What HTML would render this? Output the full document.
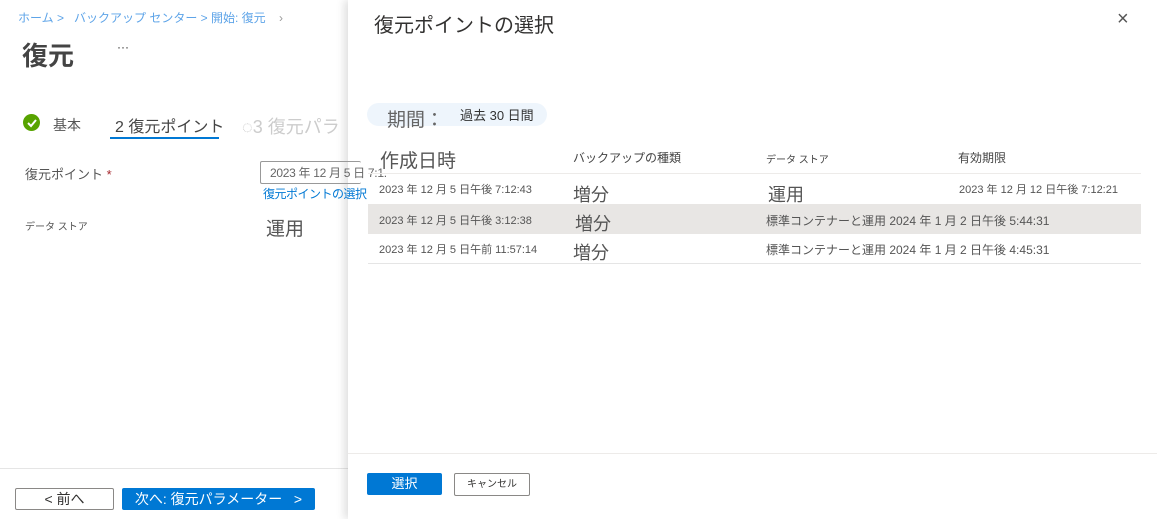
<!DOCTYPE html><html><head><meta charset="utf-8"><style>
body{margin:0;width:1157px;height:519px;position:relative;overflow:hidden;background:#fff;font-family:"Liberation Sans","Noto Sans CJK JP",sans-serif;color:#323130}
.a{position:absolute;white-space:nowrap}
</style></head><body>
<div class="a" style="left:18px;top:9px;font-size:12px;color:#5ea4e8">ホーム &gt;&nbsp;&nbsp;&nbsp;バックアップ センター &gt; 開始: 復元&nbsp;&nbsp;&nbsp;&nbsp;<span style="color:#999">›</span></div>
<div class="a" style="left:22px;top:36px;font-size:26px;font-weight:bold;color:#444">復元</div>
<div class="a" style="left:117px;top:40px;font-size:12px">···</div>
<div class="a" style="left:23px;top:114px;width:17px;height:17px;border-radius:50%;background:#57a300"></div>
<svg class="a" style="left:23px;top:114px" width="17" height="17"><path d="M5 9l3 3 5-6" stroke="#fff" stroke-width="2" fill="none"/></svg>
<div class="a" style="left:53px;top:115px;font-size:14px;color:#555">基本</div>
<div class="a" style="left:115px;top:113px;font-size:16px;color:#444">2 復元ポイント</div>
<div class="a" style="left:110px;top:137px;width:109px;height:2px;background:#0078d4"></div>
<div class="a" style="left:242px;top:113px;font-size:18px;color:#ccc">◌3 復元パラ</div>
<div class="a" style="left:25px;top:164px;font-size:13px;color:#555">復元ポイント <span style="color:#a4262c">*</span></div>
<div class="a" style="left:25px;top:218px;font-size:10px;color:#555">データ ストア</div>
<div class="a" style="left:266px;top:214px;font-size:19px;color:#555">運用</div>
<div class="a" style="left:0;top:468px;width:348px;height:1px;background:#e5e5e5"></div>
<div class="a" style="left:15px;top:488px;width:97px;height:20px;border:1px solid #8a8886;border-radius:2px;font-size:14px;text-align:center;line-height:20px">&lt; 前へ</div>
<div class="a" style="left:122px;top:488px;width:193px;height:22px;background:#0078d4;color:#fff;border-radius:2px;font-size:14px;text-align:center;line-height:22px">次へ: 復元パラメーター&nbsp;&nbsp;&nbsp;&gt;</div>
<div class="a" style="left:348px;top:0;width:809px;height:519px;background:#fff;box-shadow:-4px 0 8px rgba(0,0,0,.12)"></div>
<div class="a" style="left:260px;top:161px;width:100px;height:21px;border:1px solid #999;border-right:none;border-radius:2px"></div>
<div class="a" style="left:270px;top:164px;font-size:12px;color:#666;letter-spacing:-0.3px">2023 年 12 月 5 日 7:1.</div>
<div class="a" style="left:263px;top:185px;font-size:12px;color:#0078d4;letter-spacing:-0.5px">復元ポイントの選択</div>
<div class="a" style="left:374px;top:9px;font-size:20px;color:#323130">復元ポイントの選択</div>
<div class="a" style="left:1117px;top:8px;font-size:20px;color:#555">×</div>
<div class="a" style="left:367px;top:103px;width:180px;height:23px;border-radius:12px;background:#eef5fc"></div>
<div class="a" style="left:387px;top:105px;font-size:19px;color:#666">期間：</div>
<div class="a" style="left:460px;top:105px;font-size:13px;color:#333">過去 30 日間</div>
<div class="a" style="left:380px;top:146px;font-size:19px;color:#555">作成日時</div>
<div class="a" style="left:573px;top:149px;font-size:12px;color:#444">バックアップの種類</div>
<div class="a" style="left:766px;top:151px;font-size:10px;color:#444">データ ストア</div>
<div class="a" style="left:958px;top:149px;font-size:12px;color:#444">有効期限</div>
<div class="a" style="left:368px;top:173px;width:773px;height:1px;background:#edebe9"></div>
<div class="a" style="left:368px;top:204px;width:773px;height:30px;background:#e8e6e4"></div>
<div class="a" style="left:368px;top:263px;width:773px;height:1px;background:#e5e5e5"></div>
<div class="a" style="left:379px;top:181px;font-size:11px;color:#555">2023 年 12 月 5 日午後 7:12:43</div>
<div class="a" style="left:573px;top:181px;font-size:18px;color:#555">増分</div>
<div class="a" style="left:768px;top:181px;font-size:18px;color:#555">運用</div>
<div class="a" style="left:959px;top:181px;font-size:11px;color:#555">2023 年 12 月 12 日午後 7:12:21</div>
<div class="a" style="left:379px;top:212px;font-size:11px;color:#555">2023 年 12 月 5 日午後 3:12:38</div>
<div class="a" style="left:575px;top:210px;font-size:18px;color:#555">増分</div>
<div class="a" style="left:766px;top:212px;font-size:12px;color:#555">標準コンテナーと運用 2024 年 1 月 2 日午後 5:44:31</div>
<div class="a" style="left:379px;top:241px;font-size:11px;color:#555">2023 年 12 月 5 日午前 11:57:14</div>
<div class="a" style="left:573px;top:239px;font-size:18px;color:#555">増分</div>
<div class="a" style="left:766px;top:241px;font-size:12px;color:#555">標準コンテナーと運用 2024 年 1 月 2 日午後 4:45:31</div>
<div class="a" style="left:348px;top:453px;width:809px;height:1px;background:#edebe9"></div>
<div class="a" style="left:367px;top:473px;width:75px;height:22px;background:#0078d4;color:#fff;border-radius:2px;font-size:13px;text-align:center;line-height:22px">選択</div>
<div class="a" style="left:454px;top:473px;width:74px;height:21px;border:1px solid #8a8886;border-radius:2px;font-size:10px;text-align:center;line-height:21px">キャンセル</div>
</body></html>
